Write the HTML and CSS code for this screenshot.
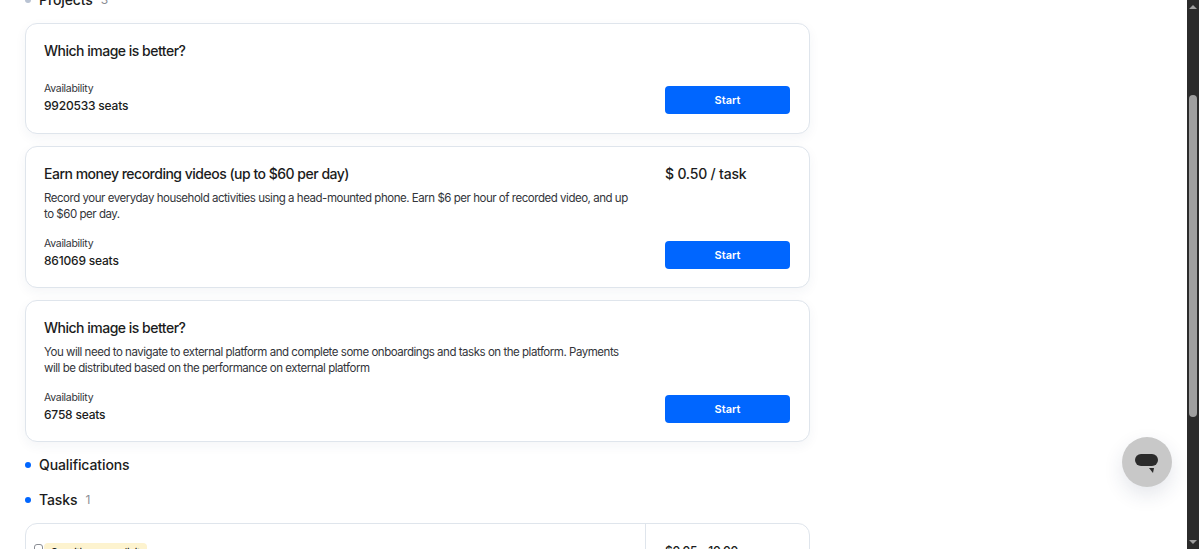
FILE: index.html
```html
<!DOCTYPE html>
<html>
<head>
    <meta charset="UTF-8" />
    <title>Projects</title>
    <link rel="stylesheet" href="styles.css">
</head>
<body>
    <div id="page">
        <div id="content">
            <h2 class="section projects"><span class="dot dot-grey"></span>Projects<span class="count">3</span></h2>

            <div class="card">
                <div class="card-top">
                    <div class="card-text">
                        <h3 class="no-desc">Which image is better?</h3>
                    </div>
                </div>
                <div class="card-bottom">
                    <div>
                        <p class="label">Availability</p>
                        <p class="seats">9920533 seats</p>
                    </div>
                    <a class="start" href="#">Start</a>
                </div>
            </div>

            <div class="card">
                <div class="card-top">
                    <div class="card-text">
                        <h3>Earn money recording videos (up to $60 per day)</h3>
                        <p class="desc">Record your everyday household activities using a head-mounted phone. Earn $6 per hour of recorded video, and up to $60 per day.</p>
                    </div>
                    <div class="price">$ 0.50 / task</div>
                </div>
                <div class="card-bottom">
                    <div>
                        <p class="label">Availability</p>
                        <p class="seats">861069 seats</p>
                    </div>
                    <a class="start" href="#">Start</a>
                </div>
            </div>

            <div class="card">
                <div class="card-top">
                    <div class="card-text">
                        <h3>Which image is better?</h3>
                        <p class="desc">You will need to navigate to external platform and complete some onboardings and tasks on the platform. Payments will be distributed based on the performance on external platform</p>
                    </div>
                </div>
                <div class="card-bottom">
                    <div>
                        <p class="label">Availability</p>
                        <p class="seats">6758 seats</p>
                    </div>
                    <a class="start" href="#">Start</a>
                </div>
            </div>

            <h2 class="section quals"><span class="dot"></span>Qualifications</h2>
            <h2 class="section tasks"><span class="dot"></span>Tasks<span class="count">1</span></h2>

            <div class="task-card">
                <div class="task-main">
                    <span class="check"></span>
                    <span class="tag">Sensitive or explicit</span>
                </div>
                <div class="task-price">$0.05 - 10.00</div>
            </div>
        </div>

        <div id="scrollbar">
            <span class="arrow-up"></span>
            <div class="thumb"></div>
            <span class="arrow-down"></span>
        </div>
    </div>

    <!-- 聊天按钮盖在内容上面 -->
    <div class="chat">
        <svg width="26" height="22" viewBox="0 0 26 22">
            <rect x="1" y="3" width="23" height="12" rx="6" fill="#2b2b2b"/>
            <path d="M15 17h5l-1 5z" fill="#2b2b2b"/>
        </svg>
    </div>
</body>
</html>
```

FILE: styles.css
```css
* {
    margin: 0;
    padding: 0;
    box-sizing: border-box;
}
html, body {
    height: 100%;
    overflow: hidden;
}
body {
    background-color: #fff;
    font-family: Inter, "Liberation Sans", sans-serif;
    color: #1b1c20;
}
#page {
    display: flex;
    height: 549px;
    overflow: hidden;
}
#content {
    flex: 1;
    padding-left: 25px;
    margin-top: -11px;          /* page is scrolled a bit */
}

.section {
    display: flex;
    align-items: center;
    font-size: 14px;
    font-weight: 500;
    line-height: 22px;
    letter-spacing: -0.1px;
}
.projects {
    height: 22px;
    margin-bottom: 12px;
}
.quals {
    margin-top: 12px;
    margin-bottom: 13px;
}
.tasks {
    margin-bottom: 12px;
}
.dot {
    width: 6px;
    height: 6px;
    border-radius: 50%;
    background-color: #0066ff;
    margin-right: 8px;
}
.dot-grey {
    background-color: #b9c3d3;
}
.count {
    margin-left: 8px;
    font-size: 12px;
    font-weight: 400;
    color: #8a8d94;
}

.card {
    width: 785px;
    border: 1px solid #dfe5ec;
    border-radius: 12px;
    background-color: #fff;
    box-shadow: 0 4px 12px rgba(30, 50, 90, 0.05);
    padding: 17px 19px 18px 18px;
    margin-bottom: 12px;
}
.card:nth-of-type(1) {
    padding-bottom: 19px;
}
.card:nth-of-type(3) {
    margin-bottom: 0;
}
.card-top {
    display: flex;
    justify-content: space-between;
}
.card-text {
    width: 590px;
}
h3 {
    font-size: 14px;
    font-weight: 500;
    line-height: 20px;
    letter-spacing: -0.5px;
}
.no-desc {
    margin-bottom: 6px;
}
.desc {
    font-size: 11.5px;
    line-height: 16px;
    margin-top: 6px;
    color: #33353a;
    letter-spacing: -0.47px;
}
.price {
    width: 125px;
    font-size: 14px;
    font-weight: 500;
    line-height: 20px;
    letter-spacing: -0.2px;
}
.card-bottom {
    display: flex;
    justify-content: space-between;
    align-items: flex-end;
    margin-top: 14px;
}
.label {
    font-size: 10.5px;
    line-height: 16px;
    color: #33353a;
    letter-spacing: -0.3px;
}
.seats {
    font-size: 12px;
    font-weight: 500;
    line-height: 17px;
    letter-spacing: -0.2px;
}
.start {
    display: block;
    width: 125px;
    height: 28px;
    line-height: 28px;
    background-color: #0066ff;
    border-radius: 4px;
    color: #fff;
    font-size: 11px;
    font-weight: 600;
    text-align: center;
    text-decoration: none;
}

.task-card {
    display: flex;
    width: 785px;
    height: 60px;
    border: 1px solid #dfe5ec;
    border-radius: 12px;
}
.task-main {
    width: 620px;
    border-right: 1px solid #dfe5ec;
    padding: 19px 0 0 8px;
    display: flex;
    align-items: flex-start;
}
.check {
    width: 9px;
    height: 9px;
    border: 1px solid #8a8d94;
    border-radius: 3px;
    margin-top: 1px;
}
.tag {
    background-color: #fdf3cf;
    border-radius: 4px;
    font-size: 10.5px;
    line-height: 16px;
    padding: 2px 7px 0;
    margin-left: 1px;
    letter-spacing: -0.34px;
}
.task-price {
    padding: 19px 0 0 19px;
    font-size: 12px;
    font-weight: 500;
    letter-spacing: -0.3px;
}

#scrollbar {
    width: 12px;
    height: 549px;
    background-color: #2b2b2b;
    display: flex;
    flex-direction: column;
    align-items: center;
    flex-shrink: 0;
}
.arrow-up, .arrow-down {
    width: 0;
    height: 0;
    border-left: 4px solid transparent;
    border-right: 4px solid transparent;
}
.arrow-up {
    border-bottom: 4px solid #a0a0a0;
    margin-top: 5px;
}
.thumb {
    width: 8px;
    height: 322px;
    background-color: #9f9f9f;
    border-radius: 4px;
    margin-top: 86px;
}
.arrow-down {
    border-top: 4px solid #a0a0a0;
    margin-top: auto;
    margin-bottom: 5px;
}

.chat {
    position: absolute;
    left: 1122px;
    top: 437px;
    width: 50px;
    height: 50px;
    border-radius: 50%;
    background-color: #c8c8c8;
    box-shadow: 0 8px 20px rgba(30, 50, 90, 0.12);
    display: flex;
    align-items: center;
    justify-content: center;
}
```
